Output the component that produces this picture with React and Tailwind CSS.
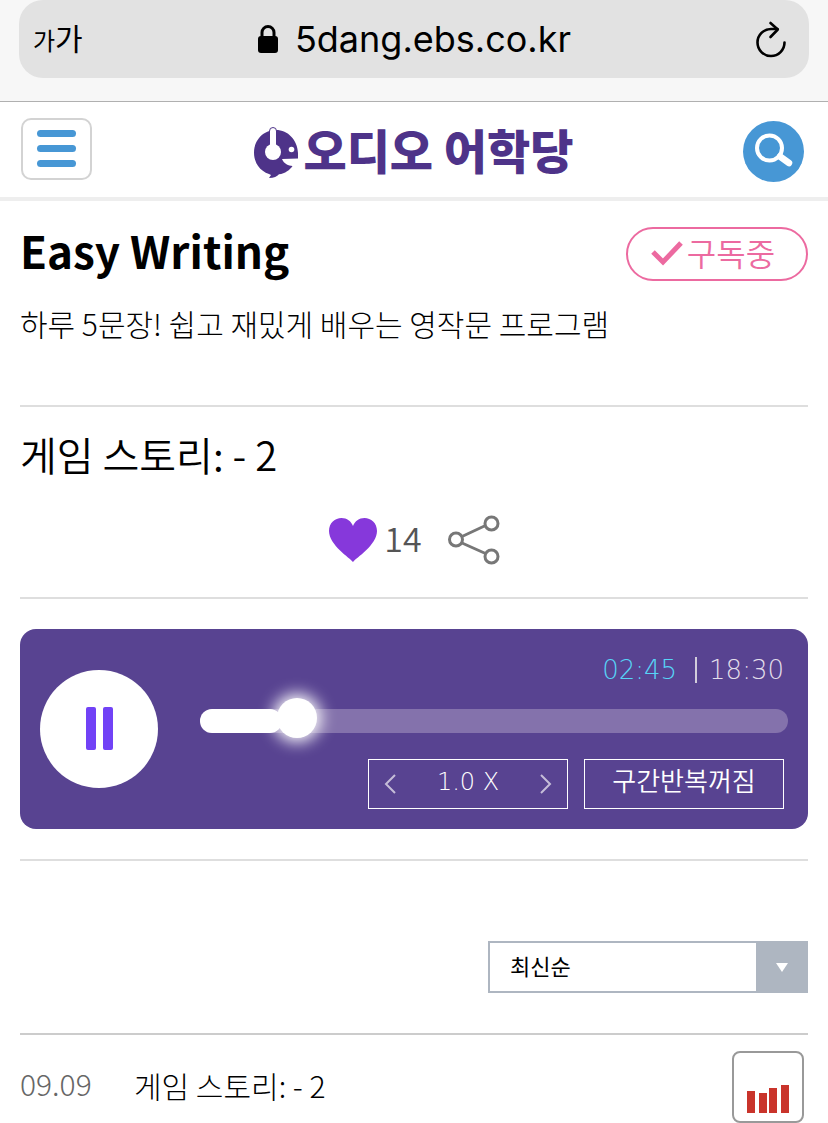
import { useState } from "react";

const SPEEDS = ["0.8", "1.0", "1.2", "1.5"];

const episodes = [{ id: 1, date: "09.09", title: "게임 스토리: - 2" }];

const AddressBar = () => (
  <div className="border-b border-[#b0b0b0] bg-[#f7f7f7] px-[19px] pb-[23px]">
    <div className="flex h-[78px] items-center justify-between rounded-[24px] bg-[#e2e2e2] px-[14px]">
      <button aria-label="글자 크기" className="flex w-16 items-baseline pb-1 leading-none">
        <span className="text-[24px]">가</span>
        <span className="text-[30px]">가</span>
      </button>
      <div className="flex items-center gap-4 font-['Inter',sans-serif] text-[36px] leading-none">
        <svg width="22" height="30" viewBox="0 0 22 30" aria-hidden="true">
          <path d="M5 14V8.5a6 6 0 0 1 12 0V14" fill="none" stroke="#000" strokeWidth="3" />
          <rect x="1" y="12" width="20" height="17" rx="3" />
        </svg>
        <span>5dang.ebs.co.kr</span>
      </div>
      <button aria-label="새로고침" className="flex w-16 justify-end pr-2">
        <svg width="32" height="38" viewBox="0 0 32 38" fill="none" stroke="#000" strokeWidth="2.6" strokeLinecap="round" strokeLinejoin="round">
          <path d="M29.5 22.5A13.5 13.5 0 1 1 16 9H22.5" />
          <path d="M15.5 3 22.8 9.5 15.5 17" />
        </svg>
      </button>
    </div>
  </div>
);

const Header = () => (
  <header className="flex h-[99px] items-center justify-between border-b-4 border-[#eeeeee] pb-[2px] pl-[21px] pr-6">
    <button aria-label="메뉴" className="flex h-[62px] w-[71px] flex-col items-center justify-center gap-2 rounded-[10px] border-2 border-[#d3d3d3]">
      <span className="h-[7px] w-[39px] rounded-full bg-[#4797d5]" />
      <span className="h-[7px] w-[39px] rounded-full bg-[#4797d5]" />
      <span className="h-[7px] w-[39px] rounded-full bg-[#4797d5]" />
    </button>
    <a href="#" className="flex items-center gap-1 pr-2 pt-2 text-[#4e3389]">
      <svg width="46" height="54" viewBox="0 0 46 52" aria-hidden="true">
        <path
          d="M23 3C10.500 3 1 13 1 25.500C1 36 7 44 16 47L18 48L16 51C21 51 24 49.500 26 47.300C32 46.500 37 43 39.500 39C35.500 38.500 31 37 29 32L45 31.500V26C44.500 13 35 3 23 3Z"
          fill="currentColor"
        />
        <path d="M16.500 20V4a3.500 3.500 0 0 1 7 0V20" fill="#fff" stroke="currentColor" strokeWidth="1" />
        <circle cx="20" cy="25" r="8" fill="#fff" />
        <rect x="17" y="6" width="6" height="15" fill="#fff" />
        <circle cx="38.500" cy="22.500" r="2.800" fill="#fff" />
      </svg>
      <span className="pb-2 text-[47px] font-black leading-none">오디오 어학당</span>
    </a>
    <button aria-label="검색" className="rounded-full pt-[6px]">
      <svg width="61" height="61" viewBox="0 0 61 61" fill="none" stroke="#fff">
        <circle cx="30.500" cy="30.500" r="30.500" fill="#4797d5" stroke="none" />
        <circle cx="26.500" cy="27" r="12.500" strokeWidth="4" />
        <path d="M37 35.500 46 42" strokeWidth="6.500" strokeLinecap="round" />
      </svg>
    </button>
  </header>
);

const Player = () => {
  const [playing, setPlaying] = useState(true);
  const [progress, setProgress] = useState(14);
  const [speed, setSpeed] = useState(1);
  const [repeat, setRepeat] = useState(false);

  return (
    <section className="flex items-center rounded-2xl bg-[#584391] p-5 text-white">
      <button
        aria-label={playing ? "일시정지" : "재생"}
        onClick={() => setPlaying(!playing)}
        className="flex size-[118px] shrink-0 items-center justify-center rounded-full bg-white"
      >
        <svg width="30" height="44" viewBox="0 0 30 44" fill="#7142f6">
          {playing ? (
            <>
              <rect x="2" y="0" width="10" height="43" rx="2" />
              <rect x="19" y="0" width="10" height="43" rx="2" />
            </>
          ) : (
            <path d="M3 2v40l26-20z" />
          )}
        </svg>
      </button>

      <div className="ml-[42px] min-w-0 flex-1 pt-1">
        <div className="flex h-[34px] items-center justify-end pr-1 font-['DejaVu_Sans',sans-serif] text-[26px] font-extralight leading-none">
          <span className="text-[#57d4f7]">02:45</span>
          <span className="ml-[18px] mr-3 h-[26px] w-[2px] bg-[#d2cddb]" />
          <span className="text-[#e2deea]">18:30</span>
        </div>

        <div className="relative mt-[22px] h-6 rounded-full bg-[#8472ac]">
          <div className="h-6 rounded-full bg-white" style={{ width: `${progress}%` }} />
          <input
            type="range"
            aria-label="재생 위치"
            min="0"
            max="100"
            value={progress}
            onChange={(e) => setProgress(Number(e.target.value))}
            className="absolute inset-x-0 -top-[11px] h-10 w-full cursor-pointer appearance-none bg-transparent [&::-webkit-slider-thumb]:size-10 [&::-webkit-slider-thumb]:appearance-none [&::-webkit-slider-thumb]:rounded-full [&::-webkit-slider-thumb]:bg-white [&::-webkit-slider-thumb]:shadow-[0_0_16px_4px_#ffffff]"
          />
        </div>

        <div className="mt-[26px] flex justify-end gap-4 pr-1 text-[26px] leading-none">
          <div className="flex h-[50px] w-[200px] items-center justify-between border border-white px-[15px]">
            <button aria-label="느리게" onClick={() => setSpeed(Math.max(0, speed - 1))}>
              <svg width="12" height="20" viewBox="0 0 12 20" fill="none" stroke="#c5bdd8" strokeWidth="2">
                <path d="M11 1 2 10l9 9" />
              </svg>
            </button>
            <span className="pb-1 font-['DejaVu_Sans',sans-serif] text-[24px] font-extralight">{SPEEDS[speed]} X</span>
            <button aria-label="빠르게" onClick={() => setSpeed(Math.min(SPEEDS.length - 1, speed + 1))}>
              <svg width="12" height="20" viewBox="0 0 12 20" fill="none" stroke="#c5bdd8" strokeWidth="2">
                <path d="m1 1 9 9-9 9" />
              </svg>
            </button>
          </div>
          <button onClick={() => setRepeat(!repeat)} className="h-[50px] w-[200px] border border-white pb-2 font-[350]">
            {repeat ? "구간반복켜짐" : "구간반복꺼짐"}
          </button>
        </div>
      </div>
    </section>
  );
};

const SortSelect = () => (
  <div className="relative ml-auto w-80">
    <select
      aria-label="정렬"
      className="h-[52px] w-full appearance-none border-2 border-[#aeb6c1] bg-white pb-1 pl-5 pr-14 text-[22px] leading-8"
    >
      <option>최신순</option>
      <option>오래된순</option>
    </select>
    <span className="pointer-events-none absolute inset-y-0 right-0 flex w-[52px] items-center justify-center bg-[#aeb6c1]">
      <svg width="14" height="9" viewBox="0 0 14 9" fill="#fff">
        <path d="M1 0h12L7 9z" />
      </svg>
    </span>
  </div>
);

const EpisodeRow = ({ date, title }) => (
  <li className="flex items-center pr-1 pt-4 text-[30px] font-light leading-none">
    <span className="w-[114px] pb-2 text-[#666666]">{date}</span>
    <a href="#" className="flex-1 pb-1">
      {title}
    </a>
    <button aria-label="재생 중" className="flex size-[72px] items-end justify-center rounded-lg border-2 border-[#999999] pb-2">
      <svg width="42" height="28" viewBox="0 0 42 28" fill="#c9342b">
        <rect x="0" y="6" width="8" height="22" />
        <rect x="12" y="8" width="8" height="20" />
        <rect x="22" y="3" width="8" height="25" />
        <rect x="34" y="0" width="8" height="28" />
      </svg>
    </button>
  </li>
);

export default function App() {
  return (
    <div className="bg-white font-['Noto_Sans_CJK_KR',sans-serif] text-black">
      <AddressBar />
      <Header />

      <main className="px-5">
        <section className="border-b-2 border-[#dedede] pb-[66px] pt-[26px]">
          <div className="flex items-start justify-between">
            <h1 className="text-[44px] font-bold leading-[46px]">Easy Writing</h1>
            <button className="flex h-[54px] w-[182px] items-center justify-center gap-1 rounded-full border-2 border-[#ec6aa0] pb-1 pr-2 text-[32px] font-[350] leading-none text-[#ec6aa0]">
              <svg width="32" height="26" viewBox="0 0 32 26" fill="none" stroke="currentColor" strokeWidth="5" className="mt-1">
                <path d="M2 11 12 21 30 2" />
              </svg>
              구독중
            </button>
          </div>
          <p className="mt-[26px] text-[30px] font-light leading-8">하루 5문장! 쉽고 재밌게 배우는 영작문 프로그램</p>
        </section>

        <section className="border-b-2 border-[#dedede] pb-8 pt-[26px]">
          <h2 className="text-[40px] font-[350] leading-[42px]">게임 스토리: - 2</h2>
          <div className="mt-10 flex items-center justify-center gap-[26px]">
            <button className="flex items-center gap-[6px] text-[34px] font-[350] leading-none text-[#555555]">
              <svg width="50" height="46" viewBox="0 0 50 46" fill="#8638db" aria-hidden="true">
                <path d="M25 45C22 41 1 28 1 14C1 6 7 1 13.500 1C19 1 23 4 25 9C27 4 31 1 36.500 1C43 1 49 6 49 14C49 28 28 41 25 45Z" />
              </svg>
              <span className="pb-1">14</span>
            </button>
            <button aria-label="공유">
              <svg width="52" height="50" viewBox="0 0 52 50" fill="none" stroke="#777777" strokeWidth="3">
                <circle cx="8" cy="24.500" r="6.500" />
                <circle cx="43.500" cy="8.500" r="6.500" />
                <circle cx="43.500" cy="41.500" r="6.500" />
                <path d="M14 21.500 37.500 10.500M14 28 37.500 38.500" />
              </svg>
            </button>
          </div>
        </section>

        <div className="border-b-2 border-[#dedede] py-[30px]">
          <Player />
        </div>

        <div className="border-b-2 border-[#cccccc] pb-10 pt-20">
          <SortSelect />
        </div>

        <ul>
          {episodes.map((ep) => (
            <EpisodeRow key={ep.id} date={ep.date} title={ep.title} />
          ))}
        </ul>
      </main>
    </div>
  );
}
